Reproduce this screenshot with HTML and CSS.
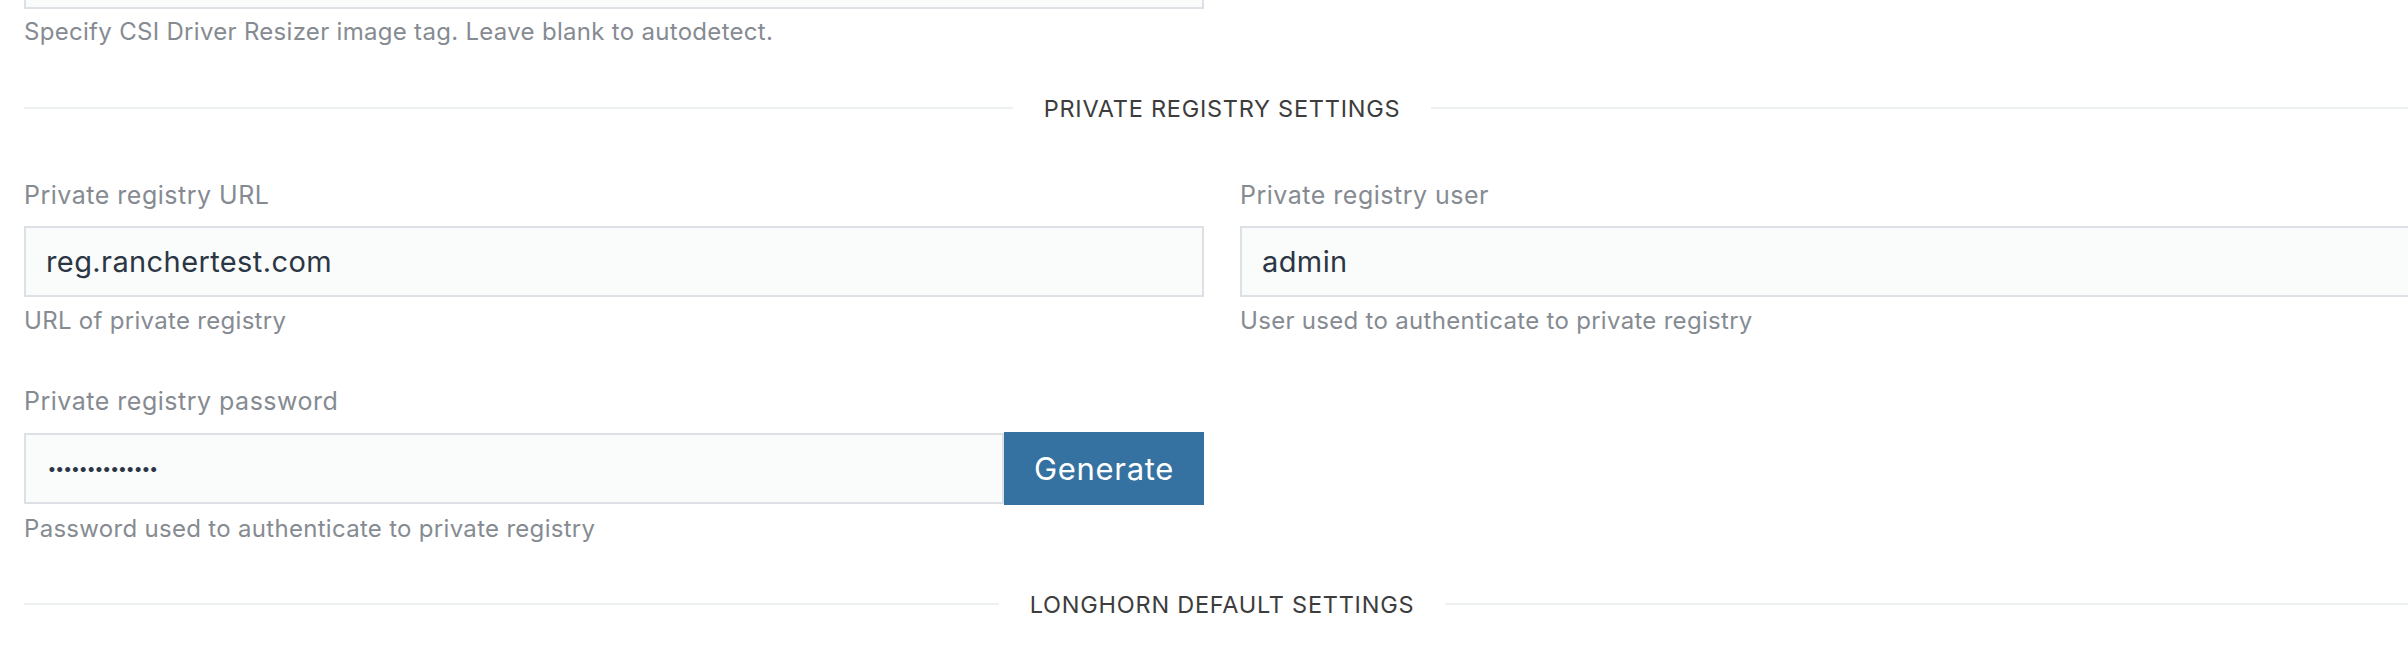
FILE: index.html
```html
<!DOCTYPE html>
<html lang="en">
<head>
<meta charset="utf-8">
<title>Private registry settings</title>
<link rel="stylesheet" href="styles.css">
</head>
<body>
<div class="page">
  <div class="grid">
    <div class="field">
      <div class="input-stub"></div>
      <p class="help help-top">Specify CSI Driver Resizer image tag. Leave blank to autodetect.</p>
    </div>
  </div>

  <div class="divider divider-first"><span class="divider-title">Private Registry Settings</span></div>

  <div class="grid">
    <div class="field">
      <label class="label" for="reg-url">Private registry URL</label>
      <input class="input" id="reg-url" type="text" value="reg.ranchertest.com">
      <p class="help">URL of private registry</p>
    </div>
    <div class="field">
      <label class="label" for="reg-user">Private registry user</label>
      <input class="input" id="reg-user" type="text" value="admin">
      <p class="help">User used to authenticate to private registry</p>
    </div>
    <div class="field">
      <label class="label" for="reg-pass">Private registry password</label>
      <div class="input-group">
        <input class="input input-pass" id="reg-pass" type="password" value="abcdefghijklmn">
        <button class="btn" type="button">Generate</button>
      </div>
      <p class="help">Password used to authenticate to private registry</p>
    </div>
  </div>

  <div class="divider divider-last"><span class="divider-title">Longhorn Default Settings</span></div>
</div>
</body>
</html>
```

FILE: styles.css
```css
html, body {
  margin: 0;
  padding: 0;
  overflow: hidden;
  background: #ffffff;
}

body {
  font-family: "Inter", "Lato", "Liberation Sans", sans-serif;
  color: #3d3d3d;
}

.page {
  width: 2396px;
  padding-left: 24px;
}

.grid {
  display: grid;
  grid-template-columns: 1180px 1180px;
  column-gap: 36px;
  row-gap: 43px;
}

.field {
  display: flex;
  flex-direction: column;
}

.input-stub {
  box-sizing: border-box;
  height: 9px;
  border: 2px solid #dde1e5;
  border-top: none;
  background: #fafbfb;
}

.label {
  font-size: 25px;
  line-height: 28px;
  letter-spacing: 0.5px;
  color: #868b92;
  margin-top: 8px;
  margin-bottom: 17px;
}

.input {
  box-sizing: border-box;
  height: 71px;
  width: 100%;
  margin: 0;
  border: 2px solid #dde1e5;
  background: #fafbfb;
  padding: 0 20px;
  font-family: "Inter", "Lato", "Liberation Sans", sans-serif;
  font-size: 29px;
  letter-spacing: 0.4px;
  color: #2b3644;
  outline: none;
}

.input-group {
  display: flex;
  align-items: center;
}

.input-pass {
  flex: 1;
  width: auto;
  min-width: 0;
  font-family: "Lato", "Liberation Sans", sans-serif;
  font-size: 13.5px;
  letter-spacing: 0;
  padding: 0 22px;
}

.btn {
  flex: none;
  width: 200px;
  height: 73px;
  border: none;
  margin: 0;
  padding: 0;
  background: #3572a1;
  color: #ffffff;
  font-family: "Inter", "Lato", "Liberation Sans", sans-serif;
  font-size: 31px;
  letter-spacing: 0.7px;
}

.help {
  margin: 9px 0 0;
  font-size: 24px;
  line-height: 30px;
  letter-spacing: 0.3px;
  color: #868b92;
}

.help-top {
  margin-top: 8px;
}

.divider {
  display: flex;
  align-items: center;
  gap: 31px;
  height: 40px;
}

.divider::before,
.divider::after {
  content: "";
  flex: 1;
  height: 2px;
  background: #eef1f1;
}

.divider-title {
  font-size: 23.5px;
  letter-spacing: 0.75px;
  text-transform: uppercase;
  color: #3d3d3d;
}

.divider-first {
  margin-top: 41px;
  margin-bottom: 45px;
}

.divider-last {
  margin-top: 40px;
}
```
